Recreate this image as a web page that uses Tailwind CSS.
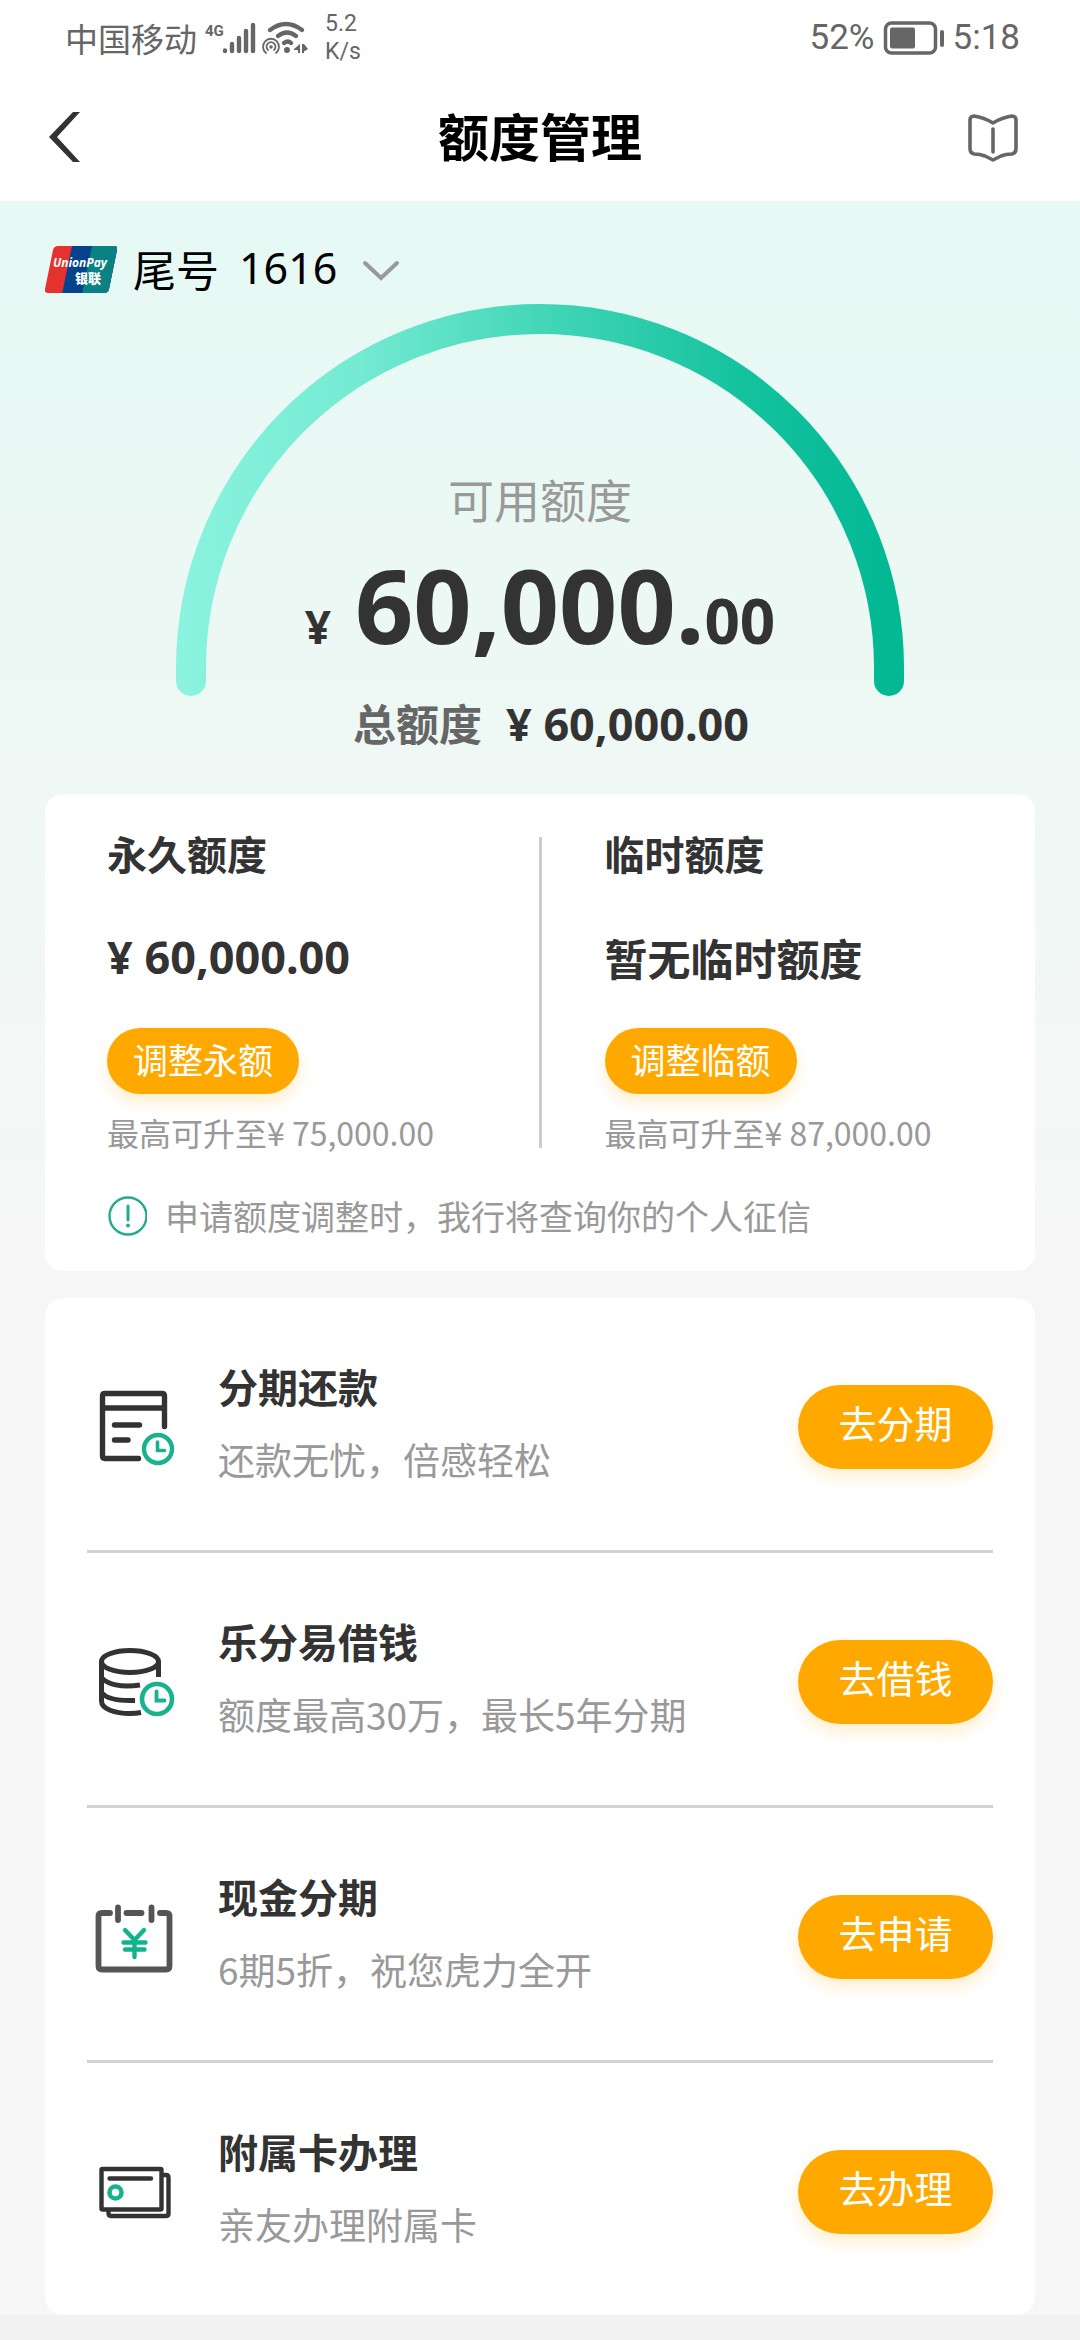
<!DOCTYPE html>
<html lang="zh-CN">
<head>
<meta charset="utf-8">
<meta name="viewport" content="width=device-width, initial-scale=1">
<title>额度管理</title>
<script src="https://cdn.jsdelivr.net/npm/@tailwindcss/browser@4"></script>
</head>
<body class="bg-[#f2f2f2] font-['Noto_Sans_CJK_SC',sans-serif] text-[#333]">

<!-- Status bar -->
<div class="flex h-[76px] items-center justify-between bg-white pr-[60px] pl-[65px] text-[#666]">
  <div class="flex items-center">
    <span class="text-[33px] leading-[40px]">中国移动</span>
    <svg class="ml-2 h-[40px] w-[104px]" viewBox="0 0 104 40" fill="none" stroke="#666" stroke-linecap="round" aria-hidden="true">
      <text x="0" y="18" font-family="Roboto, sans-serif" font-size="15" font-weight="700" fill="#666" stroke="none">4G</text>
      <path d="M20 32.500v.5M27 26v7M34 20v13M41 13v20M48 7v26" stroke-width="4.400"/>
      <path d="M65 12q16-12 32 0M73 18q9-7 18 0M79 25q4-3 7 0" stroke-width="4.200"/>
      <circle cx="82" cy="32" r="3" fill="#666" stroke="none"/>
      <path d="M61 35a8 8 0 1 1 10 0M63 32a4.500 4.500 0 1 1 6 0" stroke-width="1.800"/>
      <circle cx="66" cy="29" r="1.800" fill="#666" stroke="none"/>
      <path d="M89 31l6-5v9h-2v-3h-4zM97 35v-9h2l4 5-3 2h-1v2z" stroke="none" fill="#666"/>
    </svg>
    <div class="ml-4 font-[Roboto,sans-serif] text-[23px] leading-[28px]"><div>5.2</div><div>K/s</div></div>
  </div>
  <div class="flex items-center font-[Roboto,sans-serif] text-[35px] leading-[40px]">
    <span>52%</span>
    <svg class="mx-2 h-[34px] w-[62px]" viewBox="0 0 62 34" aria-hidden="true">
      <rect x="2.500" y="2" width="50" height="30" rx="6" fill="none" stroke="#666" stroke-width="3.500"/>
      <rect x="7" y="6.500" width="25" height="21" rx="2" fill="#666"/>
      <rect x="57" y="9" width="4" height="17" rx="2" fill="#666"/>
    </svg>
    <span>5:18</span>
  </div>
</div>

<!-- Title bar -->
<header class="grid h-[125px] grid-cols-[100px_1fr_100px] items-center bg-white px-[45px] pb-1">
  <button class="flex h-[60px] items-center" aria-label="返回">
    <svg class="h-[52px] w-[38px]" viewBox="0 0 38 52" aria-hidden="true"><path d="M28 1h7L12 26l23 25h-7L4 26z" fill="#333"/></svg>
  </button>
  <h1 class="pb-1 text-center text-[51px] leading-[60px] font-bold text-black">额度管理</h1>
  <button class="flex h-[60px] items-center justify-end pr-4" aria-label="说明">
    <svg class="h-[50px] w-[52px]" viewBox="0 0 52 50" fill="none" stroke="#666" stroke-width="3.600" stroke-linecap="round" stroke-linejoin="round" aria-hidden="true">
      <path d="M26 11Q17 5.500 7 4Q3 4 3 8V37Q3 41 7 42Q13 42 18 44Q22 46 26 48Q30 46 34 44Q39 42 45 42Q49 41 49 37V8Q49 4 45 4Q35 5.500 26 11zM26 17v23"/>
    </svg>
  </button>
</header>

<main class="bg-[#f6f6f6] bg-[linear-gradient(#e6f9f4_0px,#eff8f5_580px,#f6f6f6_1060px)] px-[45px]">

  <!-- Card selector -->
  <div class="pt-[45px]">
    <button class="flex h-[48px] items-center text-[43px] text-black">
      <svg class="h-[48px] w-[72px]" viewBox="0 0 72 48" role="img" aria-label="UnionPay 银联">
        <defs><clipPath id="up"><path d="M13 0H69Q73 0 72 4L64 43Q63 47 59 47H3Q-1 47 0 43L8 4Q9 0 13 0z"/></clipPath></defs>
        <g clip-path="url(#up)">
          <rect width="72" height="48" fill="#e6322f"/>
          <path d="M27 0H72V48H17z" fill="#06438d"/>
          <path d="M47 0H72V48H37z" fill="#0a8284"/>
        </g>
        <text x="8" y="21" font-family="Open Sans, sans-serif" font-size="12" font-weight="700" font-style="italic" fill="#fff">UnionPay</text>
        <text x="30" y="37" font-family="Noto Sans CJK SC, sans-serif" font-size="13" font-weight="900" fill="#fff">银联</text>
      </svg>
      <span class="ml-4 pb-1 leading-[44px]">尾号</span>
      <span class="ml-5 pb-1 font-['Noto_Sans',sans-serif] leading-[44px]">1616</span>
      <svg class="ml-6 h-[24px] w-[40px]" viewBox="0 0 40 24" fill="none" stroke="#999" stroke-width="4" stroke-linecap="round" aria-hidden="true"><path d="M4 5l16 15L36 5"/></svg>
    </button>
  </div>

  <!-- Limit gauge: arc and figures share one grid cell -->
  <section class="mt-[10px] grid justify-items-center">
    <svg class="col-start-1 row-start-1 h-[392px] w-[728px]" viewBox="0 0 728 392" fill="none" aria-hidden="true">
      <defs><linearGradient id="arc" gradientUnits="userSpaceOnUse" x1="0" y1="0" x2="728" y2="0">
        <stop offset="0" stop-color="#8cf3df"/><stop offset=".25" stop-color="#74ebd2"/><stop offset=".5" stop-color="#44d6b8"/><stop offset=".78" stop-color="#14c29e"/><stop offset="1" stop-color="#00b892"/>
      </linearGradient></defs>
      <path d="M15 377V364A349 349 0 0 1 713 364V377" stroke="url(#arc)" stroke-width="30" stroke-linecap="round"/>
    </svg>
    <div class="col-start-1 row-start-1 flex flex-col items-center pt-[164px] pb-[40px]">
      <p class="text-[46px] leading-[60px] text-[#999]">可用额度</p>
      <p class="mt-[17px] flex items-baseline font-['Noto_Sans',sans-serif] font-bold">
        <span class="mr-[24px] text-[46px] leading-[60px]">¥</span><span class="text-[102px] leading-[120px]">60,000.</span><span class="text-[62px] leading-[60px]">00</span>
      </p>
      <p class="mt-[27px] flex items-baseline gap-6 pl-[22px] leading-[60px] font-bold">
        <span class="text-[43px] text-[#666]">总额度</span>
        <span class="font-['Noto_Sans',sans-serif] text-[45px]">¥ 60,000.00</span>
      </p>
    </div>
  </section>

  <!-- Fixed and temporary limits -->
  <section class="rounded-[18px] bg-white px-[62px] pt-[39px] pb-[35px]">
    <div class="grid grid-cols-[1fr_3px_1fr]">
      <div>
        <h2 class="text-[40px] leading-[40px] font-bold">永久额度</h2>
        <p class="mt-[54px] font-['Noto_Sans',sans-serif] text-[45px] leading-[60px] font-bold">¥ 60,000.00</p>
        <button class="mt-[41px] block h-[66px] w-[192px] rounded-full bg-[#ffa900] pb-1 text-[35px] leading-[60px] text-white shadow-[0_8px_16px_#ffa90033]">调整永额</button>
        <p class="mt-[18px] text-[32px] leading-[40px] text-[#999]">最高可升至¥ 75,000.00</p>
      </div>
      <div class="my-1 bg-[#ccc]"></div>
      <div class="pl-[63px]">
        <h2 class="text-[40px] leading-[40px] font-bold">临时额度</h2>
        <p class="mt-[54px] text-[43px] leading-[60px] font-bold">暂无临时额度</p>
        <button class="mt-[41px] block h-[66px] w-[192px] rounded-full bg-[#ffa900] pb-1 text-[35px] leading-[60px] text-white shadow-[0_8px_16px_#ffa90033]">调整临额</button>
        <p class="mt-[18px] text-[32px] leading-[40px] text-[#999]">最高可升至¥ 87,000.00</p>
      </div>
    </div>
    <p class="mt-[44px] flex items-center gap-[18px] text-[34px] leading-[40px] text-[#999]">
      <svg class="h-[40px] w-[40px]" viewBox="0 0 40 40" fill="none" stroke="#22ab8c" aria-hidden="true"><circle cx="21" cy="20" r="18.500" stroke-width="2.400"/><path d="M21 10v14" stroke-width="3" stroke-linecap="round"/><circle cx="21" cy="29.500" r="1.900" fill="#22ab8c" stroke="none"/></svg>
      申请额度调整时，我行将查询你的个人征信
    </p>
  </section>

  <!-- Services -->
  <ul class="mt-[27px] rounded-[18px] bg-white px-[42px]">
    <li class="flex items-center border-b-[3px] border-[#d2d2d2] pt-[58px] pb-[53px]">
      <svg class="h-[84px] w-[131px]" viewBox="0 0 131 84" fill="none" stroke="#333" stroke-width="5.400" stroke-linecap="round" stroke-linejoin="round" aria-hidden="true">
        <path d="M51.500 73.500H18Q15.500 73.500 15.500 71V11Q15.500 8.500 18 8.500H75Q77.500 8.500 77.500 11V41.500M16 23H77M27.500 40H52.500M27.500 55H41"/>
        <circle cx="71" cy="64" r="14" stroke="#1ab28e" stroke-width="4.400"/>
        <path d="M70.500 57v8.500h7" stroke="#1ab28e" stroke-width="3.600" stroke-linejoin="miter"/>
      </svg>
      <div class="flex-1 pb-2">
        <h3 class="text-[40px] leading-[60px] font-bold">分期还款</h3>
        <p class="mt-[13px] text-[37px] leading-[60px] text-[#999]">还款无忧，倍感轻松</p>
      </div>
      <button class="h-[84px] w-[195px] rounded-full bg-[#ffa900] pb-[10px] text-[38px] text-white shadow-[0_8px_16px_#ffa90033]">去分期</button>
    </li>
    <li class="flex items-center border-b-[3px] border-[#d2d2d2] pt-[58px] pb-[53px]">
      <svg class="h-[84px] w-[131px]" viewBox="0 0 131 84" fill="none" stroke="#333" stroke-width="5" aria-hidden="true">
        <ellipse cx="43" cy="21.500" rx="28.500" ry="11"/>
        <path d="M71.500 21V37M14.500 21V61C14.500 69 28 73.500 43 73.500Q49 73.500 54 72.500M15 38C20 44 34 48 53 45M15 53C20 59 34 61 48 60.500"/>
        <circle cx="70" cy="59" r="15" stroke="#1ab28e" stroke-width="4.600"/>
        <path d="M69.500 51.500v9h8" stroke="#1ab28e" stroke-width="3.800" stroke-linecap="round"/>
      </svg>
      <div class="flex-1 pb-2">
        <h3 class="text-[40px] leading-[60px] font-bold">乐分易借钱</h3>
        <p class="mt-[13px] text-[37px] leading-[60px] text-[#999]">额度最高30万，最长5年分期</p>
      </div>
      <button class="h-[84px] w-[195px] rounded-full bg-[#ffa900] pb-[10px] text-[38px] text-white shadow-[0_8px_16px_#ffa90033]">去借钱</button>
    </li>
    <li class="flex items-center border-b-[3px] border-[#d2d2d2] pt-[58px] pb-[53px]">
      <svg class="h-[84px] w-[131px]" viewBox="0 0 131 84" fill="none" stroke="#555" stroke-width="5.800" stroke-linecap="round" stroke-linejoin="round" aria-hidden="true">
        <path d="M23 18H15Q11.500 18 11.500 21.500V71Q11.500 74.500 15 74.500H79Q82.500 74.500 82.500 71V21.500Q82.500 18 79 18H73M39.500 18H54.500M31 12.500V25M64.500 12.500V25"/>
        <path d="M38 35l9.500 10L57 35M47.500 45V62M36.500 47.500H58.500M38 54.500H57.500" stroke="#0fb48f" stroke-width="4.400"/>
      </svg>
      <div class="flex-1 pb-2">
        <h3 class="text-[40px] leading-[60px] font-bold">现金分期</h3>
        <p class="mt-[13px] text-[37px] leading-[60px] text-[#999]">6期5折，祝您虎力全开</p>
      </div>
      <button class="h-[84px] w-[195px] rounded-full bg-[#ffa900] pb-[10px] text-[38px] text-white shadow-[0_8px_16px_#ffa90033]">去申请</button>
    </li>
    <li class="flex items-center pt-[58px] pb-[53px]">
      <svg class="h-[84px] w-[131px]" viewBox="0 0 131 84" fill="none" stroke="#333" stroke-width="4.400" stroke-linecap="round" stroke-linejoin="round" aria-hidden="true">
        <rect x="14.500" y="19" width="60" height="40.500" rx="1"/>
        <path d="M22.500 28.500H64M77 25H79Q81.500 25 81.500 27.500V63.500Q81.500 66 79 66H24Q21.500 66 21.500 63V62"/>
        <circle cx="28.500" cy="42.500" r="6" stroke="#1ab28e" stroke-width="4.600"/>
      </svg>
      <div class="flex-1 pb-2">
        <h3 class="text-[40px] leading-[60px] font-bold">附属卡办理</h3>
        <p class="mt-[13px] text-[37px] leading-[60px] text-[#999]">亲友办理附属卡</p>
      </div>
      <button class="h-[84px] w-[195px] rounded-full bg-[#ffa900] pb-[10px] text-[38px] text-white shadow-[0_8px_16px_#ffa90033]">去办理</button>
    </li>
  </ul>
</main>
</body>
</html>
